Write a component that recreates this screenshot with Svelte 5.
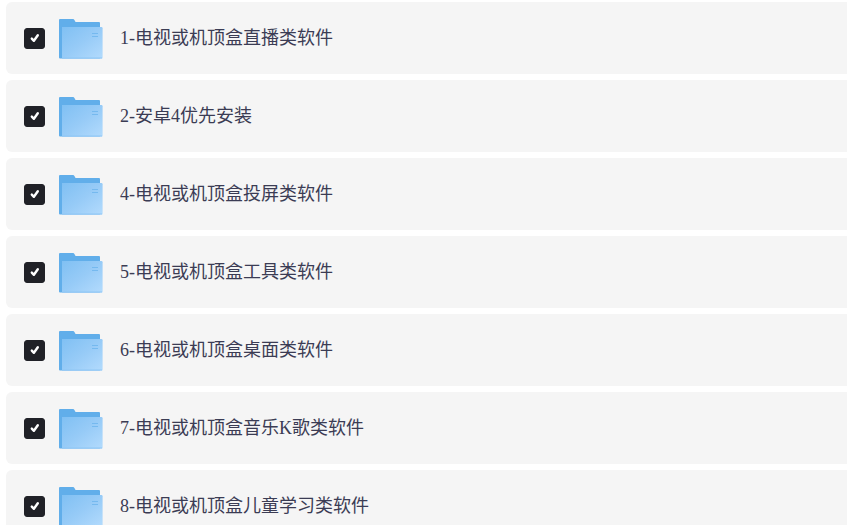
<script>
  let files = $state([
    { id: 1, name: '1-电视或机顶盒直播类软件', checked: true },
    { id: 2, name: '2-安卓4优先安装', checked: true },
    { id: 4, name: '4-电视或机顶盒投屏类软件', checked: true },
    { id: 5, name: '5-电视或机顶盒工具类软件', checked: true },
    { id: 6, name: '6-电视或机顶盒桌面类软件', checked: true },
    { id: 7, name: '7-电视或机顶盒音乐K歌类软件', checked: true },
    { id: 8, name: '8-电视或机顶盒儿童学习类软件', checked: true },
  ]);
</script>

<svg class="defs" aria-hidden="true">
  <defs>
    <linearGradient id="front" x1="0" y1="0" x2="1" y2="1">
      <stop offset="0" stop-color="#80c0f3" />
      <stop offset="0.5" stop-color="#97cbf7" />
      <stop offset="1" stop-color="#b3dbfd" />
    </linearGradient>
  </defs>
</svg>

<ul class="files">
  {#each files as f (f.id)}
    <li class="file">
      <span class="check">
        <input type="checkbox" id="file-{f.id}" bind:checked={f.checked} />
        {#if f.checked}
          <svg viewBox="0 0 21 21" aria-hidden="true">
            <path d="M7.8 10.6 L9.9 12.8 L13.8 7.2" />
          </svg>
        {/if}
      </span>
      <label for="file-{f.id}">
        <svg class="folder" viewBox="0 -2 44 42" aria-hidden="true">
          <path d="M0 1 Q0 0 1 0 H14 Q15 0 15.4 1 L16.6 3 H40 Q41 3 41 4 V39.5 H1 Q0 39.5 0 38.5 Z" fill="#61aeea" />
          <path d="M3 8 H42.4 Q43.6 8 43.6 9.2 V38.4 Q43.6 39.6 42.4 39.6 H3 Z" fill="url(#front)" />
          <path d="M3 39 H43" stroke="#8fc6f5" fill="none" />
          <path d="M33 14.5 H39 M33 17.5 H39" stroke="#75b9ef" fill="none" />
        </svg>
        <span class="name">{f.name}</span>
      </label>
    </li>
  {/each}
</ul>

<style>
  :global(body) {
    background: #fff;
    overflow: hidden;
  }

  .defs {
    position: absolute;
    width: 0;
    height: 0;
  }

  .files {
    display: flex;
    flex-direction: column;
    gap: 6px;
    box-sizing: border-box;
    height: calc(100vh - 7px);
    margin: 0;
    padding: 2px 0 0 6px;
    overflow: hidden;
    list-style: none;
  }

  .file {
    display: flex;
    flex: none;
    align-items: center;
    gap: 14px;
    height: 72px;
    padding-left: 18px;
    background: #f5f5f5;
    border-radius: 6px 0 0 6px;
  }

  .check {
    display: grid;
    width: 21px;
    height: 21px;
  }
  .check input {
    grid-area: 1 / 1;
    width: 21px;
    height: 21px;
    margin: 0;
    appearance: none;
    background: #fff;
    border: 1px solid #c8c9cf;
    border-radius: 3px;
    cursor: pointer;
  }
  .check input:checked {
    background: #202127;
    border-color: #202127;
  }
  .check svg {
    grid-area: 1 / 1;
    width: 21px;
    height: 21px;
    fill: none;
    stroke: #fff;
    stroke-width: 2.4;
    stroke-linecap: round;
    stroke-linejoin: round;
    pointer-events: none;
  }

  label {
    display: flex;
    flex: 1;
    align-items: center;
    gap: 17px;
    cursor: pointer;
  }

  .folder {
    flex: none;
    width: 44px;
    height: 42px;
  }

  .name {
    font-family: 'Liberation Serif', 'Noto Sans CJK SC', serif;
    font-size: 18px;
    line-height: 26px;
    color: #3b3c54;
    white-space: nowrap;
  }
</style>
